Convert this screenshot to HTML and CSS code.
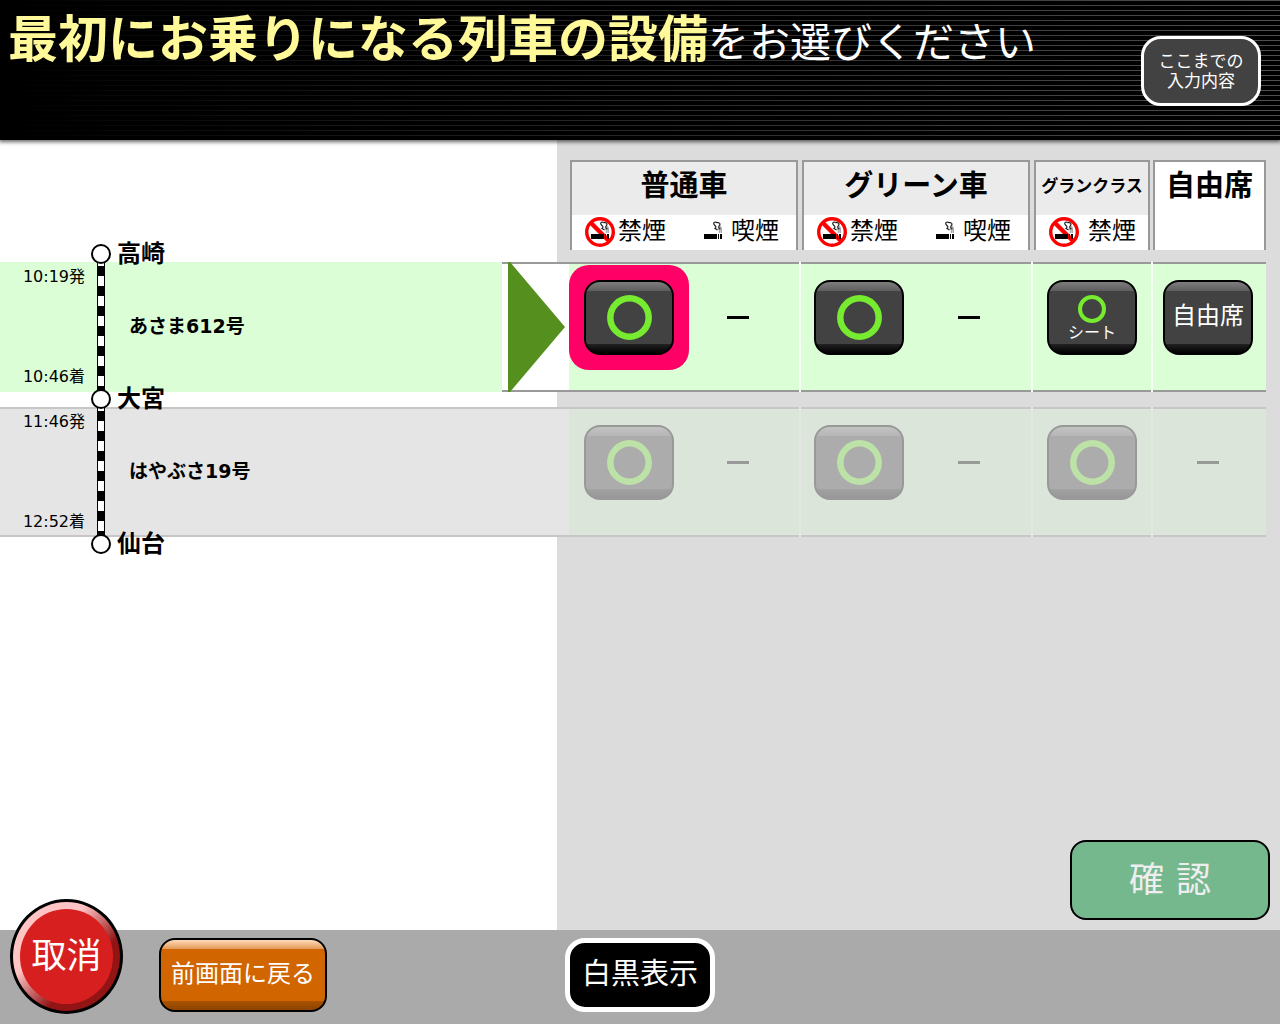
FILE: index.html
```html
<!DOCTYPE html>
<html lang="ja">
<head>
    <meta charset="UTF-8">
    <meta name="viewport" content="width=device-width, initial-scale=1.0">
    <title>設備の選択</title>
    <link rel="stylesheet" href="styles.css">
</head>
<body>
    <!-- shared icons -->
    <svg class="sprite" aria-hidden="true">
        <symbol id="cigarette" viewBox="6 4 18 18">
            <rect x="6" y="17" width="13" height="5" fill="#000"/>
            <rect x="20" y="17" width="1" height="5" fill="#000"/>
            <rect x="22" y="17" width="2" height="5" fill="#000"/>
            <path d="M21.500 16v-2.500q0-1.500-2-1.500M23.300 16v-4q0-2-1.500-3" fill="none" stroke="#aaa" stroke-width="1.500"/>
            <path d="M18 5c-2.500 0-3 1.500-1.500 3s2 2.500.5 3.500l2.500 1.500M18 5.300c3 0 5 1.200 3.500 3s-1 2.200 1 4" fill="none" stroke="#222" stroke-width="1.200"/>
        </symbol>
        <symbol id="no-smoking" viewBox="0 0 30 30">
            <circle cx="15" cy="15" r="13.300" fill="#fff" stroke="#f00" stroke-width="3.400"/>
            <path d="M5.500 5.500l19 19" stroke="#f00" stroke-width="4.500"/>
            <use href="#cigarette" x="6" y="4" width="18" height="18"/>
        </symbol>
        <symbol id="circle" viewBox="0 0 45 45">
            <circle cx="22.500" cy="22.500" r="19.200" fill="none" stroke="currentColor" stroke-width="6.500"/>
        </symbol>
        <symbol id="circle-thin" viewBox="0 0 28 28">
            <circle cx="14" cy="14" r="12" fill="none" stroke="currentColor" stroke-width="4"/>
        </symbol>
    </svg>

    <header class="header">
        <h1 class="title"><strong>最初にお乗りになる列車の設備</strong>をお選びください</h1>
        <button class="btn-summary" type="button">ここまでの<br>入力内容</button>
    </header>

    <main class="main">
        <table class="seats">
            <colgroup>
                <col>
                <col class="col-arrow">
                <col class="col-wide">
                <col class="col-wide">
                <col class="col-gran">
                <col class="col-free">
            </colgroup>
            <thead>
                <tr>
                    <td colspan="2"></td>
                    <th scope="col">
                        <div class="head">
                            <div class="head-title">普通車</div>
                            <div class="head-sub">
                                <span class="smoke"><svg class="icon-no"><use href="#no-smoking"/></svg>禁煙</span>
                                <span class="smoke smoke-wide"><svg class="icon-ok"><use href="#cigarette"/></svg>喫煙</span>
                            </div>
                        </div>
                    </th>
                    <th scope="col">
                        <div class="head">
                            <div class="head-title">グリーン車</div>
                            <div class="head-sub">
                                <span class="smoke"><svg class="icon-no"><use href="#no-smoking"/></svg>禁煙</span>
                                <span class="smoke smoke-wide"><svg class="icon-ok"><use href="#cigarette"/></svg>喫煙</span>
                            </div>
                        </div>
                    </th>
                    <th scope="col">
                        <div class="head">
                            <div class="head-title head-small">グランクラス</div>
                            <div class="head-sub">
                                <span class="smoke smoke-wide"><svg class="icon-no"><use href="#no-smoking"/></svg>禁煙</span>
                            </div>
                        </div>
                    </th>
                    <th scope="col">
                        <div class="head head-free">
                            <div class="head-title">自由席</div>
                        </div>
                    </th>
                </tr>
            </thead>
            <tbody>
                <tr class="train active">
                    <td class="route-cell">
                        <div class="route">
                            <div class="times"><span>10:19発</span><span>10:46着</span></div>
                            <div class="track"></div>
                            <div class="train-name">あさま612号</div>
                            <div class="station station-from"><i class="dot"></i>高崎</div>
                        </div>
                    </td>
                    <td class="arrow-cell">
                        <svg class="arrow" viewBox="0 0 57 130"><path d="M0 0h2L57 65 2 130H0z" fill="#558f1e"/></svg>
                    </td>
                    <td>
                        <div class="slots">
                            <div class="slot selected"><button class="seat" type="button" aria-label="普通車 禁煙"><svg class="mark"><use href="#circle"/></svg></button></div>
                            <div class="slot"><span class="none"></span></div>
                        </div>
                    </td>
                    <td>
                        <div class="slots slots-green">
                            <div class="slot"><button class="seat" type="button" aria-label="グリーン車 禁煙"><svg class="mark"><use href="#circle"/></svg></button></div>
                            <div class="slot"><span class="none"></span></div>
                        </div>
                    </td>
                    <td>
                        <div class="slots single">
                            <div class="slot"><button class="seat seat-small" type="button"><svg class="mark-small"><use href="#circle-thin"/></svg>シート</button></div>
                        </div>
                    </td>
                    <td>
                        <div class="slots single slots-free">
                            <div class="slot"><button class="seat seat-text" type="button">自由席</button></div>
                        </div>
                    </td>
                </tr>
                <tr class="spacer"><td colspan="6"></td></tr>
                <tr class="train inactive">
                    <td class="route-cell">
                        <div class="route">
                            <div class="times"><span>11:46発</span><span>12:52着</span></div>
                            <div class="track"></div>
                            <div class="train-name">はやぶさ19号</div>
                            <div class="station station-from"><i class="dot"></i>大宮</div>
                            <div class="station station-to"><i class="dot"></i>仙台</div>
                        </div>
                    </td>
                    <td class="arrow-cell"></td>
                    <td>
                        <div class="slots">
                            <div class="slot"><button class="seat" type="button" disabled aria-label="普通車 禁煙"><svg class="mark"><use href="#circle"/></svg></button></div>
                            <div class="slot"><span class="none"></span></div>
                        </div>
                    </td>
                    <td>
                        <div class="slots slots-green">
                            <div class="slot"><button class="seat" type="button" disabled aria-label="グリーン車 禁煙"><svg class="mark"><use href="#circle"/></svg></button></div>
                            <div class="slot"><span class="none"></span></div>
                        </div>
                    </td>
                    <td>
                        <div class="slots single">
                            <div class="slot"><button class="seat" type="button" disabled aria-label="グランクラス 禁煙"><svg class="mark"><use href="#circle"/></svg></button></div>
                        </div>
                    </td>
                    <td>
                        <div class="slots single slots-free">
                            <div class="slot"><span class="none"></span></div>
                        </div>
                    </td>
                </tr>
            </tbody>
        </table>

        <button class="btn-confirm" type="button" disabled><span>確</span><span>認</span></button>
    </main>

    <footer class="footer">
        <div class="footer-left">
            <button class="btn-cancel" type="button"><span class="btn-cancel-face">取消</span></button>
            <button class="btn-back" type="button">前画面に戻る</button>
        </div>
        <button class="btn-mono" type="button">白黒表示</button>
    </footer>
</body>
</html>
```

FILE: styles.css
```css
* {
    box-sizing: border-box;
}

body {
    margin: 0;
    min-height: 100vh;
    display: flex;
    flex-direction: column;
    font-family: "DejaVu Sans", "Noto Sans CJK JP", sans-serif;
    color: #000;
}

button {
    font-family: inherit;
    margin: 0;
    padding: 0;
    cursor: pointer;
}

svg {
    display: block;
}

.sprite {
    display: none;
}

/* header */
.header {
    height: 140px;
    display: flex;
    justify-content: space-between;
    align-items: flex-start;
    padding: 0 19px 0 8px;
    background:
        linear-gradient(to right, #000, rgba(0, 0, 0, 0)),
        repeating-linear-gradient(to bottom, #505050 0, #505050 1px, #000 1px, #000 5px);
    box-shadow: 0 1px 4px 1px rgba(0, 0, 0, 0.6);
    position: relative;
}

.title {
    margin: 0;
    color: #fff;
    font-size: 41px;
    font-weight: normal;
    line-height: 80px;
    white-space: nowrap;
}

.title strong {
    color: #fff999;
    font-size: 50px;
}

.btn-summary {
    width: 120px;
    height: 70px;
    margin-top: 36px;
    border: 3px solid #fff;
    border-radius: 20px;
    background-color: #424242;
    color: #fff;
    font-size: 17px;
    line-height: 20px;
}

/* main */
.main {
    flex: 1;
    display: flex;
    flex-direction: column;
    justify-content: space-between;
    padding: 20px 10px 10px 0;
    background: linear-gradient(to right, #fff 43.5%, #dcdcdc 43.5%);
}

.seats {
    width: calc(100% - 4px);
    table-layout: fixed;
    border-collapse: separate;
    border-spacing: 0;
}

.seats td, .seats th {
    padding: 0;
    vertical-align: top;
}

.col-arrow {
    width: 67px;
}

.col-wide {
    width: 232px;
}

.col-gran {
    width: 120px;
}

.col-free {
    width: 113px;
}

.head {
    height: 90px;
    margin: 0 3px 12px 1px;
    border: 2px solid #999;
    border-bottom: none;
    background-color: #fff;
}

.head-free {
    margin: 0 0 12px;
}

.head-title {
    height: 53px;
    background-color: #ebebeb;
    font-size: 29px;
    line-height: 48px;
    white-space: nowrap;
}

.head-small {
    font-size: 17px;
}

.head-free .head-title {
    background-color: #fff;
}

.head-sub {
    height: 35px;
    display: flex;
    justify-content: space-between;
    padding: 0 17px 0 13px;
    font-size: 24px;
    font-weight: normal;
    line-height: 32px;
}

.smoke {
    display: flex;
    gap: 3px;
    white-space: nowrap;
}

.smoke-wide {
    gap: 9px;
}

.icon-no {
    width: 30px;
    height: 30px;
    margin-top: 2px;
}

.icon-ok {
    width: 18px;
    height: 18px;
    margin-top: 6px;
}

.train {
    height: 130px;
}

.spacer {
    height: 15px;
}

.train td {
    box-shadow: inset 0 2px #999, inset 0 -2px #999;
    background-color: #dcfed7;
    border-right: 2px solid #f5fff4;
}

.train td.arrow-cell {
    background-color: #fff;
    border-right: none;
}

.train td.route-cell {
    border-right: none;
}

.train td:last-child {
    border-right: none;
}

.active td.route-cell {
    box-shadow: none;
}

.inactive td {
    box-shadow: inset 0 2px #c6c6c6, inset 0 -2px #c6c6c6;
    background-color: #dbe5da;
    border-right-color: #e3e6e3;
}

.inactive td.route-cell, .inactive td.arrow-cell {
    background-color: #e5e5e5;
}

.arrow {
    width: 57px;
    height: 130px;
    margin-left: 6px;
}

/* route */
.route {
    position: relative;
    height: 130px;
    display: flex;
}

.times {
    width: 97px;
    display: flex;
    flex-direction: column;
    justify-content: space-between;
    align-items: flex-end;
    padding: 7px 12px 7px 0;
    font-size: 16px;
    line-height: 16px;
}

.track {
    width: 8px;
    border: solid #000;
    border-width: 0 1px;
    background: repeating-linear-gradient(to bottom, #fff 0, #fff 4px, #000 4px, #000 14px, #fff 14px, #fff 20px);
}

.train-name {
    margin-left: 24px;
    font-size: 19px;
    font-weight: bold;
    line-height: 128px;
}

.station {
    position: absolute;
    left: 91px;
    display: flex;
    align-items: center;
    gap: 6px;
    font-size: 24px;
    font-weight: bold;
    line-height: 24px;
}

.station-from {
    top: -20px;
}

.station-to {
    bottom: -19px;
}

.dot {
    width: 20px;
    height: 20px;
    border: 2px solid #000;
    border-radius: 50%;
    background-color: #fff;
}

/* seat buttons */
.slots {
    display: grid;
    grid-template-columns: 120px 98px;
    padding-top: 3px;
}

.slots-green {
    grid-template-columns: 116px 104px;
}

.single {
    grid-template-columns: 100%;
}

.slots-free {
    padding-right: 3px;
}

.slot {
    height: 105px;
    display: flex;
    justify-content: center;
    align-items: center;
}

.selected {
    border-radius: 20px;
    background-color: #ff0066;
}

.seat {
    width: 90px;
    height: 75px;
    display: flex;
    flex-direction: column;
    justify-content: center;
    align-items: center;
    border: 2px solid #000;
    border-radius: 16px;
    background: linear-gradient(to bottom, #7d7d7d 0, #5e5e5e 9px, #424242 9px, #424242 62px, #222 62px, #000 71px);
    color: #fff;
    font-size: 24px;
    line-height: 24px;
}

.seat-text {
    padding-bottom: 4px;
}

.seat-small {
    font-size: 16px;
    line-height: 16px;
    gap: 2px;
}

.mark {
    width: 45px;
    height: 45px;
    color: #77eb2f;
}

.mark-small {
    width: 28px;
    height: 28px;
    color: #77eb2f;
}

.seat:disabled {
    border-color: #999;
    background: linear-gradient(to bottom, #c3c3c3 0, #b6b6b6 9px, #acacac 9px, #acacac 62px, #a2a2a2 62px, #979797 71px);
}

.seat:disabled .mark {
    color: #bde2a7;
}

.none {
    width: 22px;
    height: 3px;
    background-color: #000;
}

.inactive .none {
    background-color: #999;
}

.btn-confirm {
    width: 200px;
    height: 80px;
    align-self: flex-end;
    display: flex;
    justify-content: center;
    align-items: center;
    gap: 12px;
    padding-bottom: 8px;
    border: 2px solid #000;
    border-radius: 16px;
    background-color: #76b88e;
    color: #eee;
    font-size: 35px;
}

/* footer */
.footer {
    height: 94px;
    display: grid;
    grid-template-columns: 1fr auto 1fr;
    padding: 8px 10px 0;
    background-color: #aaa;
}

.footer-left {
    display: flex;
    align-items: flex-start;
    gap: 36px;
}

.btn-cancel {
    width: 113px;
    height: 115px;
    margin-top: -39px;
    padding: 7px;
    border: 3px solid #000;
    border-radius: 50%;
    background: linear-gradient(135deg, #ffc4c4 35%, #921414 65%);
}

.btn-cancel-face {
    height: 100%;
    display: flex;
    justify-content: center;
    align-items: center;
    padding-bottom: 8px;
    border-radius: 50%;
    background-color: #d71f1f;
    color: #fff;
    font-size: 35px;
}

.btn-back {
    width: 168px;
    height: 74px;
    padding-bottom: 8px;
    border: 2px solid #000;
    border-radius: 16px;
    background: linear-gradient(to bottom, #ffdcb8 0, #e29a58 9px, #d16500 9px, #d16500 61px, #aa5200 61px, #8c4300 70px);
    color: #fff;
    font-size: 24px;
}

.btn-mono {
    width: 150px;
    height: 74px;
    padding-bottom: 8px;
    border: 5px solid #fff;
    border-radius: 20px;
    background-color: #000;
    color: #fff;
    font-size: 29px;
}
```
